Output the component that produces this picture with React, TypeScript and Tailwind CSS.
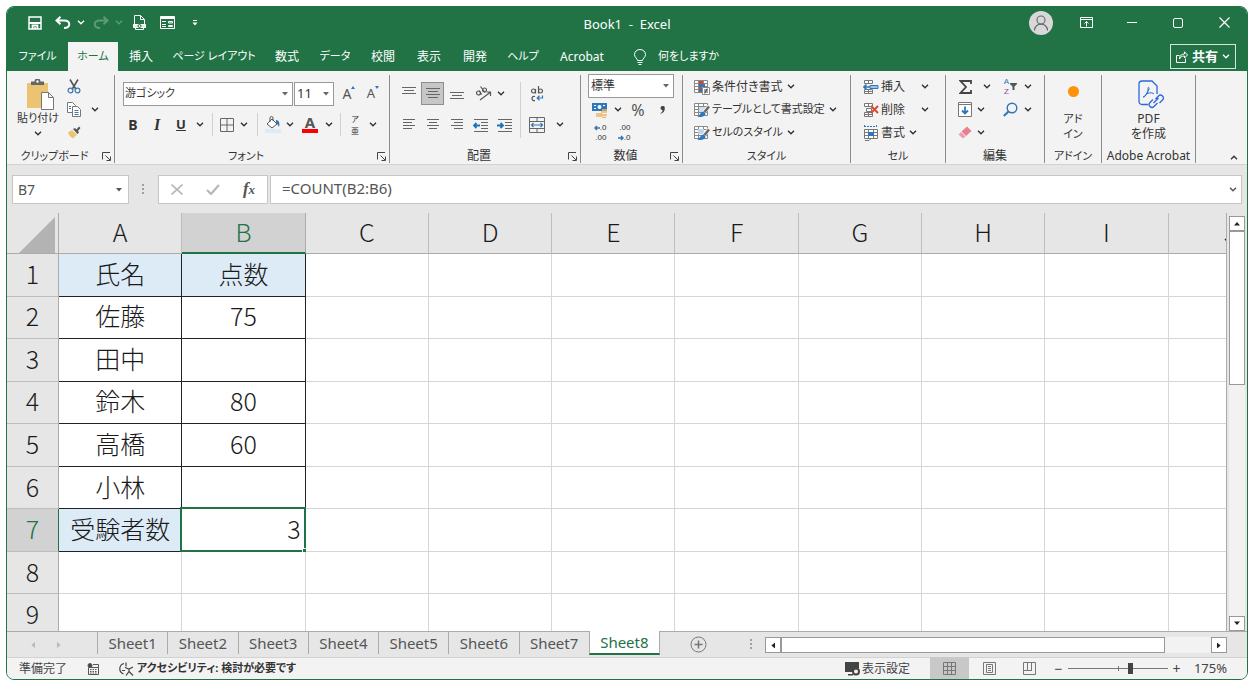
import type { ReactNode } from "react"
import clsx from "clsx"

const menuTabs = [
  { label: "ファイル", width: "w-[61px]", kana: true },
  { label: "ホーム", width: "w-[50px]", kana: true, active: true },
  { label: "挿入", width: "w-[46px]" },
  { label: "ページ レイアウト", width: "w-[100px]", kana: true },
  { label: "数式", width: "w-[46px]" },
  { label: "データ", width: "w-[50px]", kana: true },
  { label: "校閲", width: "w-[46px]" },
  { label: "表示", width: "w-[46px]" },
  { label: "開発", width: "w-[46px]" },
  { label: "ヘルプ", width: "w-[50px]", kana: true },
  { label: "Acrobat", width: "w-[68px]" },
]

const columns = ["A", "B", "C", "D", "E", "F", "G", "H", "I", "J"]

const rows = [
  ["氏名", "点数"],
  ["佐藤", "75"],
  ["田中", ""],
  ["鈴木", "80"],
  ["高橋", "60"],
  ["小林", ""],
  ["受験者数", "3"],
  [],
  [],
]

const sheets = ["Sheet1", "Sheet2", "Sheet3", "Sheet4", "Sheet5", "Sheet6", "Sheet7", "Sheet8"]

function Chevron({ className }: { className?: string }) {
  return (
    <svg viewBox="0 0 8 5" className={clsx("w-2 h-[5px] shrink-0", className)} fill="none" stroke="currentColor" strokeWidth="1.4">
      <path d="M1 .8 4 3.8 7 .8" />
    </svg>
  )
}

function Caret({ className }: { className?: string }) {
  return (
    <svg viewBox="0 0 6 4" className={clsx("w-[6px] h-1 shrink-0 pointer-events-none", className)} fill="currentColor">
      <path d="M0 0h6L3 3.6z" />
    </svg>
  )
}

function Tool({ label, className, children }: { label: string; className?: string; children: ReactNode }) {
  return (
    <button aria-label={label} className={clsx("flex items-center justify-center shrink-0 h-[23px]", className ?? "w-6")}>
      {children}
    </button>
  )
}

function More({ className }: { className?: string }) {
  return (
    <Tool label="その他" className={className ?? "w-[14px]"}>
      <Chevron />
    </Tool>
  )
}

function Launcher() {
  return (
    <button aria-label="詳細設定" className="mr-[3px]">
      <svg viewBox="0 0 9 9" className="w-[9px] h-[9px]" fill="none" stroke="#444" strokeWidth="1">
        <path d="M.5 7.500V.5H8M3.500 3.500 8 8M8.500 4.500v4h-4" />
      </svg>
    </button>
  )
}

function Group({
  title,
  width,
  kana,
  launcher,
  children,
}: {
  title: string
  width: string
  kana?: boolean
  launcher?: boolean
  children: ReactNode
}) {
  return (
    <section className={clsx("flex flex-col shrink-0 border-r border-[#8c8c8c] h-[88px]", width)}>
      <div className="h-[74px]">{children}</div>
      <div className="flex items-center h-[14px] whitespace-nowrap">
        <span className={clsx("flex-1 text-center leading-[14px]", kana && "text-[11px]")}>{title}</span>
        {launcher && <Launcher />}
      </div>
    </section>
  )
}

function Divider({ className }: { className?: string }) {
  return <span className={clsx("w-px bg-[#d0d0d0] shrink-0", className ?? "h-[23px] mx-[5px]")} />
}

function Lines({ rows, className }: { rows: [number, number][]; className?: string }) {
  return (
    <svg viewBox="0 0 16 13" className={clsx("w-4 h-[13px]", className)} stroke="#666" strokeWidth="1">
      {rows.map(([from, to], i) => (
        <path key={i} d={`M${from} ${i * 3 + 1.5}H${to}`} />
      ))}
    </svg>
  )
}

function Indent({ right }: { right?: boolean }) {
  return (
    <svg viewBox="0 0 16 14" className="w-4 h-[14px]" fill="none" stroke="#666">
      <path d="M1 1.500h14M8 4.500h7M8 7.500h7M8 10.500h7M1 13.500h14" />
      <path d={right ? "M0 7.500h5.500M3.500 5l2.500 2.500L3.500 10" : "M7 7.500H1.500M3.500 5 1 7.500 3.500 10"} stroke="#2372b9" strokeWidth="1.8" />
    </svg>
  )
}

function TableIcon({ kind }: { kind: "conditional" | "table" | "cell" }) {
  return (
    <svg viewBox="0 0 16 16" className="w-4 h-4 shrink-0" fill="none" stroke="#888">
      <path d="M.5 1.500h13v12H.5zM.5 4.500h13M.5 7.500h13M.5 10.500h13M4.500 1.500v12M9.500 1.500v12" fill="#fff" />
      {kind === "conditional" && (
        <>
          <path d="M5 2h4v3H5zM5 8h3v2H5z" fill="#d7472f" stroke="none" />
          <path d="M5 5h6v3H5zM5 10h3v3H5z" fill="#2f76bb" stroke="none" />
          <path d="M8.500 8.500h7v7h-7z" fill="#fff" />
          <path d="M10 11h4M10 13h4M13.200 9.500l-2.500 5" stroke="#444" />
        </>
      )}
      {kind !== "conditional" && (
        <>
          {kind === "cell" && <path d="M4 4h6v5H4z" fill="#bcd6ee" stroke="none" />}
          {kind === "table" && <path d="M5 5h8v5H5z" fill="#cfe0f0" stroke="none" />}
          <path d="M15.500 4 10 10" stroke="#f3f3f3" strokeWidth="4" />
          <path d="M15 4.500 10.500 10" stroke="#666" strokeWidth="2.400" />
          <path d="M9.500 9.500c-3 0-3.500 4-6 5 3 1.500 8 0 8-3z" fill="#2f76bb" stroke="none" />
        </>
      )}
    </svg>
  )
}

function CellIcon({ kind }: { kind: "insert" | "delete" | "format" }) {
  return (
    <svg viewBox="0 0 16 16" className="w-4 h-4 shrink-0" fill="none" stroke="#777">
      {kind === "format" ? (
        <>
          <path d="M1 1.500h13M1.500 0v3M13.500 0v3" stroke="#2f76bb" strokeDasharray="2 1" />
          <path d="M1.500 4.500h13v9h-13zM5.500 4.500v9M10.500 4.500v9M1.500 7.500h13M1.500 10.500h13" fill="#fff" />
          <path d="M5 7h6v4H5z" fill="#2f76bb" stroke="none" />
          <path d="M2 15.500h4l2-2" />
        </>
      ) : (
        <>
          <path d="M1.500 1.500h8v3h-8zM5.500 1.500v3M1.500 10.500h8v4h-8zM5.500 10.500v4M1.500 12.500h8" fill="#fff" />
          {kind === "insert" ? (
            <>
              <path d="M7 6.500h8v3H7z" stroke="#2f76bb" fill="#9cc3e6" />
              <path d="M7 8H1M3.500 5.500 1 8l2.500 2.500" stroke="#2f76bb" strokeWidth="1.600" />
            </>
          ) : (
            <>
              <path d="M3.500 6.500h5v3h-5z" fill="#fff" />
              <path d="m8 4 7 7M15 4l-7 7" stroke="#d7472f" strokeWidth="1.800" />
            </>
          )}
        </>
      )}
    </svg>
  )
}

function TitleBar() {
  return (
    <div className="flex items-center h-[35px] text-white">
      <div className="flex items-center flex-1 pb-1">
        <Tool label="上書き保存" className="w-6 ml-4">
          <svg viewBox="0 0 14 14" className="w-[14px] h-[14px]" fill="none" stroke="#fff" strokeWidth="1.500">
            <path d="M1 1h12v12H1z" />
            <path d="M1 7h12M4.500 13V9.500h5V13" strokeWidth="1.800" />
            <path d="M7 11v2" />
          </svg>
        </Tool>
        <Tool label="元に戻す" className="w-[30px]">
          <svg viewBox="0 0 16 13" className="w-4 h-[13px] ml-[2px]" fill="none" stroke="#fff" strokeWidth="2">
            <path d="M5.500.8 1.500 4.500l4 3.800M1.500 4.500H9c7 0 7 7.500 0 7.500" />
          </svg>
        </Tool>
        <More className="w-2" />
        <Tool label="やり直し" className="w-[30px] text-[#5c9a78]">
          <svg viewBox="0 0 16 13" className="w-4 h-[13px] ml-[2px]" fill="none" stroke="currentColor" strokeWidth="2">
            <path d="M10.500.8l4 3.700-4 3.800M14.500 4.500H7c-7 0-7 7.500 0 7.500" />
          </svg>
        </Tool>
        <span className="text-[#5c9a78]">
          <More className="w-2" />
        </span>
        <Tool label="印刷プレビュー" className="w-[30px]">
          <svg viewBox="0 0 13 15" className="w-[13px] h-[15px] ml-[2px]" fill="none" stroke="#fff" strokeWidth="1">
            <path d="M1.500 9V.5h6l4 4V9M7.500.5v4h4M2.500 12v2.500h8V12" />
            <path d="M.5 9.500h12v3H.5z" fill="#e4efe8" />
            <circle cx="6.500" cy="11" r="1.500" stroke="#217346" />
          </svg>
        </Tool>
        <Tool label="フォーム" className="w-7">
          <svg viewBox="0 0 15 13" className="w-[15px] h-[13px]" fill="none" stroke="#fff">
            <path d="M.5.5h14v12H.5zM.5 1.500h14M.5 2.500h14" />
            <path d="M2 5.500h4M2 8.500h4M2 10.500h4M8.500 5.500h4v1.500h-4zM8.500 9.500h4v1h-4z" />
          </svg>
        </Tool>
        <Tool label="クイック アクセス ツール バーのカスタマイズ" className="w-7">
          <svg viewBox="0 0 6 6" className="w-[6px] h-[6px]" fill="#fff">
            <path d="M1 0h4v1H1zM.5 2.500h5L3 5.500z" />
          </svg>
        </Tool>
      </div>
      <h1 className="text-[13px] whitespace-pre">Book1  -  Excel</h1>
      <div className="flex items-center justify-end flex-1 pb-1">
        <button aria-label="アカウント" className="w-6 h-6 rounded-full bg-[#d8d8d8] flex items-center justify-center mr-[10px]">
          <svg viewBox="0 0 16 16" className="w-4 h-4" fill="none" stroke="#666" strokeWidth="1.100">
            <circle cx="8" cy="5" r="4" />
            <path d="M1.500 15.500c0-8.500 13-8.500 13 0" />
          </svg>
        </button>
        <Tool label="リボンの表示オプション" className="w-[46px]">
          <svg viewBox="0 0 13 11" className="w-[13px] h-[11px]" fill="none" stroke="#fff">
            <path d="M.5.5h12v10H.5zM.5 2.500h12M6.500 9.500V4.500M4.500 6.500l2-2 2 2" />
          </svg>
        </Tool>
        <Tool label="最小化" className="w-[46px]">
          <span className="w-[10px] h-px bg-white" />
        </Tool>
        <Tool label="最大化" className="w-[46px]">
          <span className="w-[10px] h-[10px] border border-white rounded-[2px]" />
        </Tool>
        <Tool label="閉じる" className="w-[46px]">
          <svg viewBox="0 0 11 11" className="w-[11px] h-[11px]" stroke="#fff" strokeWidth="1.200">
            <path d="m.5.5 10 10M10.500.5l-10 10" />
          </svg>
        </Tool>
      </div>
    </div>
  )
}

function MenuBar() {
  return (
    <nav className="flex h-[29px] text-white text-xs whitespace-nowrap">
      {menuTabs.map((t) => (
        <button
          key={t.label}
          className={clsx("shrink-0 h-full", t.width, t.kana && "text-[11px]", t.active && "bg-[#f3f3f3] text-[#217346]")}
        >
          {t.label}
        </button>
      ))}
      <button className="flex items-center gap-3 ml-[18px] text-[11px]">
        <svg viewBox="0 0 12 16" className="w-3 h-4" fill="none" stroke="#fff">
          <path d="M3.500 11.500c0-2-3-3-3-6a5.500 5 0 0 1 11 0c0 3-3 4-3 6zM3.500 13.500h5M4.500 15.500h3" />
        </svg>
        何をしますか
      </button>
      <button className="flex items-center justify-center gap-1 ml-auto mr-[11px] mt-[2px] w-[66px] h-[25px] border border-[#d5e5db] font-bold text-[13px]">
        <svg viewBox="0 0 12 12" className="w-3 h-3" fill="none" stroke="#fff">
          <path d="M3.500 4.500h-3v7h9V7.500M3.500 8c0-3 1.500-5 5-5V.8l3 3.200-3 3V5c-3 0-4 1-5 3z" />
        </svg>
        共有
        <Chevron />
      </button>
    </nav>
  )
}

function Ribbon() {
  return (
    <div className="flex h-[94px] shrink-0 pt-1 bg-[#f3f3f3] text-[#333] text-xs border-b border-[#d2d2d2] overflow-hidden">
      <Group title="クリップボード" width="w-[108px]" kana launcher>
        <div className="flex">
          <button className="flex flex-col items-center w-[48px] ml-[7px] pt-1 leading-4 whitespace-nowrap text-[11px]">
            <svg viewBox="0 0 28 31" className="w-7 h-[31px] ml-1">
              <path d="M1 4h21v25H1z" fill="#ecc373" />
              <path d="M5 6V2.500h3.500a3 3 0 0 1 6 0H18V6z" fill="#666" />
              <circle cx="11.500" cy="2.500" r="1.200" fill="#fff" />
              <path d="M15.500 13.500h7l5 5v12h-12zM22.500 13.500v5h5" fill="#fff" stroke="#777" />
            </svg>
            貼り付け
            <Chevron className="mt-[5px]" />
          </button>
          <div className="w-6">
            <Tool label="切り取り">
              <svg viewBox="0 0 14 15" className="w-[14px] h-[15px]" fill="none">
                <path d="m3 .5 6 10M11 .5l-6 10" stroke="#555" strokeWidth="1.600" />
                <circle cx="3.500" cy="11.500" r="2.400" stroke="#3d7ab8" strokeWidth="1.200" />
                <circle cx="10.500" cy="11.500" r="2.400" stroke="#3d7ab8" strokeWidth="1.200" />
              </svg>
            </Tool>
            <Tool label="コピー">
              <svg viewBox="0 0 15 15" className="w-[15px] h-[15px]" fill="#fff" stroke="#777">
                <path d="M.5.5h5l3 3v7h-8z" />
                <path d="M5.500 4.500h5l3 3v7h-8z" />
                <path d="M2 4.500h2M2 6.500h2M7.500 8.500h4M7.500 10.500h4M7.500 12.500h4" stroke="#3d7ab8" />
              </svg>
            </Tool>
            <Tool label="書式のコピー">
              <svg viewBox="0 0 14 13" className="w-[14px] h-[13px]">
                <path d="M1 6.500 5 4l5 4.500L6 12.500C4 11 2 10 1 6.500z" fill="#ecc373" />
                <path d="m6 3 2-1 1.500 1.500L12 .5 13.500 2l-2.500 3 1 1.500-1.500 1.500z" fill="#555" />
              </svg>
            </Tool>
          </div>
          <div className="pt-[23px] pl-[2px]">
            <More />
          </div>
        </div>
      </Group>

      <Group title="フォント" width="w-[275px]" kana launcher>
        <div className="flex items-center h-[31px] mt-[3px] pl-2">
          <div className="flex items-center w-[170px] h-6 border border-[#999] bg-white mr-px">
            <select aria-label="フォント名" className="appearance-none flex-1 min-w-0 bg-transparent pl-[1px] text-[11px] outline-none">
              <option>游ゴシック</option>
            </select>
            <Caret className="mr-1 text-[#666]" />
          </div>
          <div className="flex items-center w-10 h-6 border border-[#999] bg-white">
            <select aria-label="フォント サイズ" className="appearance-none flex-1 min-w-0 bg-transparent pl-[2px] text-[13px] outline-none">
              <option>11</option>
            </select>
            <Caret className="mr-1 text-[#666]" />
          </div>
          <Tool label="フォント サイズの拡大" className="w-6 ml-[3px] text-[#555]">
            <span className="text-sm">A</span>
            <svg viewBox="0 0 4 3" className="w-1 h-[3px] mb-3" fill="#2f76bb"><path d="M0 3 2 0l2 3z" /></svg>
          </Tool>
          <Tool label="フォント サイズの縮小" className="w-6 text-[#555]">
            <span className="text-[13px]">A</span>
            <svg viewBox="0 0 4 3" className="w-1 h-[3px] mb-3" fill="#2f76bb"><path d="M0 0h4L2 3z" /></svg>
          </Tool>
        </div>
        <div className="flex items-center h-[31px] pl-[6px] text-sm">
          <Tool label="太字"><b>B</b></Tool>
          <Tool label="斜体"><i className="font-['Liberation_Serif',serif] font-bold text-base">I</i></Tool>
          <Tool label="下線"><b className="underline text-[13px]">U</b></Tool>
          <More />
          <Divider />
          <Tool label="罫線" className="w-[18px]">
            <svg viewBox="0 0 14 14" className="w-[14px] h-[14px]" fill="none" stroke="#666">
              <path d="M.5.5h13v13H.5zM7 .5v13M.5 7h13" />
            </svg>
          </Tool>
          <More className="w-4" />
          <Divider />
          <Tool label="塗りつぶしの色" className="w-5">
            <svg viewBox="0 0 16 17" className="w-4 h-[17px]" fill="none">
              <path d="M0 13h16v4H0z" fill="#ddebf7" />
              <path d="m7 3 5 5-5 4-5-4z" fill="#fff" stroke="#555" />
              <path d="M5 6V2a1.500 1.500 0 0 1 3 0v3" stroke="#555" />
              <path d="M11 4c3 0 4 3 3 7-1-1-1-3-3-4z" fill="#2f76bb" />
            </svg>
          </Tool>
          <More />
          <Tool label="フォントの色" className="w-[26px]">
            <span className="flex flex-col items-center">
              <b className="leading-[13px] text-[15px] text-[#555]">A</b>
              <span className="w-4 h-1 bg-[#fe0000]" />
            </span>
          </Tool>
          <More className="w-3" />
          <Divider />
          <Tool label="ふりがなの表示" className="w-[18px]">
            <span className="flex flex-col text-[8px] leading-[12px]">
              <span>ア</span>
              <span>亜</span>
            </span>
          </Tool>
          <More className="w-[18px]" />
        </div>
      </Group>

      <Group title="配置" width="w-[191px]" launcher>
        <div className="flex">
          <div className="pt-[3px] pl-[7px]">
            <div className="flex items-center h-[31px]">
              <Tool label="上揃え"><Lines rows={[[1, 15], [3, 13], [1, 15]]} className="mb-[3px]" /></Tool>
              <Tool label="上下中央揃え" className="w-[23px] bg-[#c6c6c6] border border-[#8e8e8e]">
                <Lines rows={[[1, 15], [3, 13], [1, 15], [3, 13]]} />
              </Tool>
              <Tool label="下揃え" className="w-[25px]"><Lines rows={[[1, 15], [3, 13], [1, 15]]} className="mt-2" /></Tool>
              <Tool label="方向" className="w-7">
                <svg viewBox="0 0 17 15" className="w-[17px] h-[15px]" fill="none" stroke="#555" strokeWidth="1.200">
                  <circle cx="3.500" cy="7" r="2" />
                  <path d="m4 4.500 2.800 4M5.500.5l4.500 6" />
                  <circle cx="9.500" cy="4" r="2" />
                  <path d="M5 14 15 6.500M11.500 6H15.500v4" />
                </svg>
              </Tool>
              <More className="w-2" />
            </div>
            <div className="flex items-center h-[31px]">
              <Tool label="左揃え"><Lines rows={[[2, 14], [2, 11], [2, 14], [2, 11]]} /></Tool>
              <Tool label="中央揃え"><Lines rows={[[2, 14], [4, 12], [2, 14], [4, 12]]} /></Tool>
              <Tool label="右揃え"><Lines rows={[[2, 14], [5, 14], [2, 14], [5, 14]]} /></Tool>
              <Tool label="インデントを減らす"><Indent /></Tool>
              <Tool label="インデントを増やす"><Indent right /></Tool>
            </div>
          </div>
          <Divider className="h-14 ml-[3px] mt-[7px]" />
          <div className="pt-[3px] pl-1">
            <div className="flex items-center h-[31px]">
              <Tool label="折り返して全体を表示する">
                <svg viewBox="0 0 14 16" className="w-[14px] h-4" fill="none" stroke="#555" strokeWidth="1.200">
                  <circle cx="3.500" cy="5" r="2" />
                  <path d="M5.500 3v4.500M8.500 0v7.500" />
                  <circle cx="10.500" cy="5" r="2" />
                  <path d="M5 10.500c-4-1.500-4 5.500 0 4" />
                  <path d="M12.500 9.500V12H7.500M9.500 9.800 7.200 12l2.300 2.200" stroke="#2f76bb" />
                </svg>
              </Tool>
            </div>
            <div className="flex items-center h-[31px]">
              <Tool label="セルを結合して中央揃え">
                <svg viewBox="0 0 16 16" className="w-4 h-4" fill="none" stroke="#666">
                  <path d="M.5.500h15v15H.5zM.5 4.500h15M.5 11.500h15M8 .5v4M8 11.500v4" />
                  <path d="M2.500 8h11M4.500 6l-2 2 2 2M11.500 6l2 2-2 2" stroke="#2f76bb" strokeWidth="1.200" />
                </svg>
              </Tool>
              <More className="w-[22px]" />
            </div>
          </div>
        </div>
      </Group>

      <Group title="数値" width="w-[102px]" launcher>
        <div className="pl-[7px] -mt-px">
          <div className="flex items-center w-[86px] h-6 border border-[#999] bg-white">
            <select aria-label="表示形式" className="appearance-none flex-1 min-w-0 bg-transparent pl-[2px] outline-none">
              <option>標準</option>
            </select>
            <Caret className="mr-1 text-[#666]" />
          </div>
          <div className="flex items-center">
            <Tool label="通貨表示形式">
              <svg viewBox="0 0 16 16" className="w-4 h-4" fill="none">
                <path d="M0 1h15v8H0z" fill="#2f76bb" />
                <path d="M2 3h2v1H2zM11 3h2v1h-2zM2 6h2v1H2z" fill="#fff" />
                <circle cx="7.500" cy="5" r="2" fill="#fff" />
                <path d="M10 8h5M9 10h6M4 12h6M9 13h6M4 14h6M10 15.500h4" stroke="#ecb764" strokeWidth="1.500" />
              </svg>
            </Tool>
            <More className="w-[11px]" />
            <Tool label="パーセント スタイル" className="w-[30px]"><span className="text-base text-[#555]">%</span></Tool>
            <Tool label="桁区切りスタイル" className="w-[18px]">
              <svg viewBox="0 0 5 8" className="w-[5px] h-2" fill="#444"><path d="M2.500 0a2 2 0 0 1 2.300 2C5 5 3 7 .8 7.800L.5 7C2 6.500 2.500 5.500 2.500 4a2 2 0 0 1 0-4z" /></svg>
            </Tool>
          </div>
          <div className="flex items-center font-['Liberation_Sans',sans-serif] text-[8px] leading-[10px]">
            <Tool label="小数点以下の表示桁数を増やす">
              <span className="flex flex-col items-end">
                <span className="flex items-center">
                  <svg viewBox="0 0 6 6" className="w-[6px] h-[6px]" fill="none" stroke="#2f76bb" strokeWidth="1.500"><path d="M6 3H1M3 1 1 3l2 2" /></svg>
                  .0
                </span>
                <span>.00</span>
              </span>
            </Tool>
            <Tool label="小数点以下の表示桁数を減らす">
              <span className="flex flex-col items-end">
                <span>.00</span>
                <span className="flex items-center">
                  <svg viewBox="0 0 6 6" className="w-[6px] h-[6px]" fill="none" stroke="#2f76bb" strokeWidth="1.500"><path d="M0 3h5M3 1l2 2-2 2" /></svg>
                  .0
                </span>
              </span>
            </Tool>
          </div>
        </div>
      </Group>

      <Group title="スタイル" width="w-[168px]" kana>
        <div className="pl-[11px] whitespace-nowrap">
          <button className="flex items-center h-[23px] gap-[2px]"><TableIcon kind="conditional" />条件付き書式<Chevron className="ml-[2px]" /></button>
          <button className="flex items-center h-[23px] gap-[2px] text-[11px]"><TableIcon kind="table" />テーブルとして書式設定<Chevron className="ml-[2px]" /></button>
          <button className="flex items-center h-[23px] gap-[2px] text-[11px]"><TableIcon kind="cell" />セルのスタイル<Chevron className="ml-[2px]" /></button>
        </div>
      </Group>

      <Group title="セル" width="w-[95px]" kana>
        <div className="pl-3 whitespace-nowrap">
          <button className="flex items-center h-[23px] gap-[2px]"><CellIcon kind="insert" />挿入<Chevron className="ml-[14px]" /></button>
          <button className="flex items-center h-[23px] gap-[2px]"><CellIcon kind="delete" />削除<Chevron className="ml-[14px]" /></button>
          <button className="flex items-center h-[23px] gap-[2px]"><CellIcon kind="format" />書式<Chevron className="ml-[2px]" /></button>
        </div>
      </Group>

      <Group title="編集" width="w-[99px]">
        <div className="pl-[7px]">
          <div className="flex">
            <Tool label="オート SUM">
              <svg viewBox="0 0 13 14" className="w-[13px] h-[14px]" fill="none" stroke="#444" strokeWidth="1.800">
                <path d="M12 4V1H1.500L7 7 1.500 13H12v-3" />
              </svg>
            </Tool>
            <More className="w-5" />
            <Tool label="並べ替えとフィルター" className="w-[27px]">
              <span className="flex flex-col font-['Liberation_Sans',sans-serif] text-[8px] leading-[10px]">
                <span className="text-[#2f76bb]">A</span>
                <span className="text-[#8a4ba8]">Z</span>
              </span>
              <svg viewBox="0 0 7 7" className="w-[7px] h-[7px] ml-px" fill="#555"><path d="M0 0h7v1L4.500 3.500V7h-2V3.500L0 1z" /></svg>
            </Tool>
            <More className="w-2" />
          </div>
          <div className="flex">
            <Tool label="フィル">
              <svg viewBox="0 0 14 15" className="w-[14px] h-[15px]" fill="#fff" stroke="#777">
                <path d="M.5.5h13v14H.5zM.5 2.500h13" />
                <path d="M7 4.500v7M4 8.500l3 3 3-3" fill="none" stroke="#2f76bb" strokeWidth="1.800" />
              </svg>
            </Tool>
            <More className="w-2" />
            <Tool label="検索と選択" className="w-[27px] ml-3">
              <svg viewBox="0 0 15 15" className="w-[15px] h-[15px]" fill="none" stroke="#2f76bb">
                <circle cx="9" cy="6" r="4.800" strokeWidth="1.400" />
                <path d="M6 9 .8 14" strokeWidth="2" />
              </svg>
            </Tool>
            <More className="w-2" />
          </div>
          <div className="flex">
            <Tool label="クリア">
              <svg viewBox="0 0 14 13" className="w-[14px] h-[13px]">
                <path d="M9 .5 13.500 5 8 10 3.500 5.500z" fill="#ea7f92" />
                <path d="M3 6 7.500 10.500 5 12.500.5 8.500z" fill="#ef9dab" />
              </svg>
            </Tool>
            <More className="w-2" />
          </div>
        </div>
      </Group>

      <Group title="アドイン" width="w-[57px]" kana>
        <button className="flex flex-col items-center w-full leading-[15px] pt-[11px] text-[11px]">
          <span className="w-[11px] h-[11px] rounded-full bg-[#ff9208] mb-[14px]" />
          アド
          <br />
          イン
        </button>
      </Group>

      <Group title="Adobe Acrobat" width="w-[94px]">
        <button className="flex flex-col items-center w-full leading-[15px] pt-[5px]">
          <svg viewBox="0 0 26 29" className="w-[26px] h-[29px] mb-[2px] ml-1" fill="none" stroke="#2b67e0" strokeWidth="1.300">
            <path d="M10 24.500H4a3 3 0 0 1-3-3V4a3 3 0 0 1 3-3h10l5 5v8" />
            <path d="M5 17c4-2 5-6 5-8.500 0-2 1.500-1 1 .5-1 3-3.500 7.500-5.500 8.500M9 13.500c3-1 6-1 7 .5" strokeWidth="1" />
            <path d="m17.500 19 3-3a2.800 2.800 0 0 1 4 4l-3 3M19.500 23l-3.500 3.500a2.800 2.800 0 0 1-4-4l3-3M15.500 23l5-5" />
          </svg>
          PDF
          <br />
          を作成
        </button>
      </Group>
      <button aria-label="リボンを折りたたむ" className="ml-auto mr-2 mt-auto mb-1">
        <Chevron className="rotate-180 w-[10px]" />
      </button>
    </div>
  )
}

function Dots() {
  return (
    <svg viewBox="0 0 3 11" className="w-[3px] h-[11px]" fill="#a0a0a0">
      <path d="M0 0h2v2H0zM0 4h2v2H0zM0 8h2v2H0z" />
    </svg>
  )
}

function FormulaBar() {
  return (
    <div className="flex h-12 shrink-0 pt-[10px] pl-[5px] pr-[5px] text-[#555] text-sm">
      <div className="flex items-center w-[117px] h-[29px] border border-[#c6c6c6] bg-white">
        <input aria-label="名前ボックス" defaultValue="B7" className="flex-1 min-w-0 pl-[5px] outline-none" />
        <Caret className="mr-[6px]" />
      </div>
      <div className="flex items-center justify-center w-[29px] h-[29px]">
        <Dots />
      </div>
      <div className="flex items-center w-[110px] h-[29px] border border-[#c6c6c6] bg-white">
        <Tool label="キャンセル" className="w-9">
          <svg viewBox="0 0 12 11" className="w-3 h-[11px]" stroke="#b8b8b8" strokeWidth="1.600"><path d="m.5.5 11 10M11.500.5l-11 10" /></svg>
        </Tool>
        <Tool label="入力" className="w-9">
          <svg viewBox="0 0 14 11" className="w-[14px] h-[11px]" fill="none" stroke="#b8b8b8" strokeWidth="2.200"><path d="m1 6 4 4 8-9" /></svg>
        </Tool>
        <Tool label="関数の挿入" className="w-9">
          <i className="font-['Liberation_Serif',serif] font-bold text-[17px]">f<span className="text-[13px]">x</span></i>
        </Tool>
      </div>
      <div className="flex items-center flex-1 h-[29px] ml-[2px] border border-[#c6c6c6] bg-white">
        <input aria-label="数式バー" defaultValue="=COUNT(B2:B6)" className="flex-1 min-w-0 pl-[11px] pb-1 text-[15px] leading-6 outline-none" />
        <Tool label="数式バーの展開" className="w-4"><Chevron /></Tool>
      </div>
    </div>
  )
}

function Grid() {
  return (
    <div className="flex flex-1 min-h-0 overflow-hidden">
      <div className="flex-1 min-w-0 overflow-hidden border-r border-[#ababab] mr-[2px]">
        <table className="table-fixed border-separate border-spacing-0 w-[1285px] h-[424px] text-[25px] leading-8 text-[#1a1a1a] font-light font-['Noto_Sans_CJK_JP',sans-serif]">
          <thead>
            <tr>
              <th className="w-[52px] p-0 bg-[#e6e6e6] border-r border-b border-[#ababab]">
                <svg viewBox="0 0 36 36" className="w-9 h-9 ml-3 mt-1" fill="#b3b3b3"><path d="M36 0v36H0z" /></svg>
              </th>
              {columns.map((c) => (
                <th
                  key={c}
                  scope="col"
                  className={clsx(
                    "p-0 pb-1 font-light border-r",
                    c === "B"
                      ? "bg-[#d2d2d2] text-[#217346] border-r-[#ababab] border-b-2 border-b-[#217346]"
                      : "bg-[#e6e6e6] border-b border-r-[#bdbdbd] border-b-[#ababab]"
                  )}
                >
                  {c}
                </th>
              ))}
            </tr>
          </thead>
          <tbody>
            {rows.map((row, r) => (
              <tr key={r}>
                <th
                  scope="row"
                  className={clsx(
                    "p-0 pb-1 font-light border-r border-b border-b-[#bdbdbd]",
                    r === 6 ? "bg-[#d2d2d2] text-[#217346] border-r-[#217346]" : "bg-[#e6e6e6] border-r-[#ababab]"
                  )}
                >
                  {r + 1}
                </th>
                {columns.map((c, i) => (
                  <td
                    key={c}
                    className={clsx(
                      "relative p-0 pb-1 border-r border-b",
                      i < 2 && r < 7 ? "border-[#222]" : "border-[#d6d6d6]",
                      (i < 2 && r === 0) || (i === 0 && r === 6) ? "bg-[#ddebf7]" : "bg-white",
                      i === 1 && r === 6 ? "text-right pr-1" : "text-center"
                    )}
                  >
                    {row[i]}
                    {i === 1 && r === 6 && (
                      <>
                        <span className="absolute -inset-px border-2 border-[#217346] -top-[2px] -left-[2px]" />
                        <span className="absolute -right-[3px] -bottom-[3px] w-[5px] h-[5px] bg-[#217346] outline outline-white" />
                      </>
                    )}
                  </td>
                ))}
              </tr>
            ))}
          </tbody>
        </table>
      </div>
      <div className="flex flex-col w-4 mr-[2px] mt-[3px] bg-[#f2f2f2]">
        <button aria-label="上へスクロール" className="flex items-center justify-center h-[15px] border border-[#999] bg-white">
          <Caret className="rotate-180 w-2 h-[5px] text-[#222]" />
        </button>
        <div className="h-[154px] border border-[#999] bg-white" />
        <button aria-label="下へスクロール" className="flex items-center justify-center h-[15px] mt-auto border border-[#999] bg-white">
          <Caret className="w-2 h-[5px] text-[#222]" />
        </button>
      </div>
    </div>
  )
}

function SheetBar() {
  return (
    <div className="flex h-[26px] shrink-0 border-t border-[#ababab] text-[15px] text-[#555]">
      <div className="flex items-center justify-center gap-5 w-[90px] pr-3 text-[#b8b8b8]">
        <button aria-label="前のシート"><Caret className="rotate-90" /></button>
        <button aria-label="次のシート"><Caret className="-rotate-90" /></button>
      </div>
      <div className="flex w-[563px] shrink-0">
        {sheets.map((s) => (
          <button
            key={s}
            className={clsx(
              "flex-1 leading-[22px]",
              s === "Sheet8"
                ? "h-6 -mt-px bg-white text-[#217346] border-x border-[#ababab] border-b-2 border-b-[#217346]"
                : "h-[22px] border-l border-[#ababab]"
            )}
          >
            {s}
          </button>
        ))}
      </div>
      <button aria-label="新しいシート" className="ml-[30px]">
        <svg viewBox="0 0 17 17" className="w-[17px] h-[17px]" fill="none" stroke="#777">
          <circle cx="8.500" cy="8.500" r="7.500" />
          <path d="M8.500 4.500v8M4.500 8.500h8" strokeWidth="1.500" />
        </svg>
      </button>
      <div className="flex items-center ml-auto pr-3">
        <Dots />
      </div>
      <div className="flex w-[462px] h-4 mt-[5px] mr-5 bg-[#f2f2f2]">
        <button aria-label="左へスクロール" className="flex items-center justify-center w-4 border border-[#999] bg-white">
          <Caret className="rotate-90 w-2 h-[5px] text-[#222]" />
        </button>
        <div className="w-[384px] border border-[#999] bg-white" />
        <button aria-label="右へスクロール" className="flex items-center justify-center w-4 ml-auto border border-[#999] bg-white">
          <Caret className="-rotate-90 w-2 h-[5px] text-[#222]" />
        </button>
      </div>
    </div>
  )
}

function StatusBar() {
  return (
    <div className="flex items-center h-[22px] shrink-0 pl-3 pr-5 bg-[#f3f3f3] text-xs text-[#444] border-t border-[#d2d2d2] whitespace-nowrap">
      <span className="w-[68px]">準備完了</span>
      <button aria-label="マクロの記録" className="w-8">
        <svg viewBox="0 0 12 12" className="w-3 h-3" fill="none" stroke="#555">
          <path d="M1.500 4.500h10v7h-10zM6 1.500h5.500v3" />
          <circle cx="3" cy="2.500" r="2" fill="#444" />
          <path d="M3 6.500h7M3 8.500h7M3 10h7" strokeDasharray="1.500 1" />
        </svg>
      </button>
      <button className="flex items-center gap-[2px] font-bold text-[11px] text-[#333]">
        <svg viewBox="0 0 16 14" className="w-4 h-[14px]" fill="none" stroke="#444" strokeWidth="1.200">
          <path d="M5 1.500C-.5 3-.5 10 4.500 12M7 .5v4M6 5.500l4 1.500 4-2M10 7v2.500l-3 4M10 9.500l4 4" />
          <path d="M3 8.500h3" />
        </svg>
        アクセシビリティ: 検討が必要です
      </button>
      <button className="flex items-center gap-px ml-auto mr-5">
        <svg viewBox="0 0 16 15" className="w-4 h-[15px]">
          <path d="M0 1h14v6l-6 4H0zM3 13h5v1.500H3z" fill="#444" />
          <circle cx="11" cy="10.500" r="3" fill="#f3f3f3" stroke="#444" strokeWidth="2" />
        </svg>
        表示設定
      </button>
      <Tool label="標準" className="w-[39px] bg-[#c8c8c8]">
        <svg viewBox="0 0 13 13" className="w-[13px] h-[13px]" fill="none" stroke="#777"><path d="M.5.5h12v12H.5zM4.500.5v12M8.500.5v12M.5 4.500h12M.5 8.500h12" /></svg>
      </Tool>
      <Tool label="ページ レイアウト" className="w-10">
        <svg viewBox="0 0 13 13" className="w-[13px] h-[13px]" fill="none" stroke="#777"><path d="M.5.5h12v12H.5zM3.500 2.500h6v8h-6zM5 4.500h3M5 6.500h3M5 8.500h3" /></svg>
      </Tool>
      <Tool label="改ページ プレビュー" className="w-10">
        <svg viewBox="0 0 13 13" className="w-[13px] h-[13px]" fill="none" stroke="#777"><path d="M.5.5h12v12H.5zM4.500.5v8M8.500.5v8M0 8.500h9" /></svg>
      </Tool>
      <button aria-label="縮小" className="w-[19px] text-sm">−</button>
      <span className="relative flex items-center">
        <input
          type="range"
          aria-label="ズーム"
          min={0}
          max={100}
          defaultValue={63}
          className="appearance-none w-[100px] h-px bg-[#777] [&::-webkit-slider-thumb]:appearance-none [&::-webkit-slider-thumb]:w-[5px] [&::-webkit-slider-thumb]:h-[11px] [&::-webkit-slider-thumb]:bg-[#444]"
        />
        <span className="absolute left-1/2 w-px h-[5px] bg-[#777]" />
      </span>
      <button aria-label="拡大" className="w-[17px] text-sm">+</button>
      <span className="w-[42px] text-right text-[13px]">175%</span>
    </div>
  )
}

export default function App() {
  return (
    <div className="h-screen bg-white pt-[6px] pl-[6px] pr-[7px] pb-[7px] font-['Noto_Sans','Noto_Sans_CJK_JP',sans-serif] [font-feature-settings:'palt']">
      <main className="flex flex-col h-full bg-[#e6e6e6] border border-[#217346] rounded-lg overflow-hidden">
        <header className="bg-[#217346] shrink-0">
          <TitleBar />
          <MenuBar />
        </header>
        <Ribbon />
        <FormulaBar />
        <Grid />
        <SheetBar />
        <StatusBar />
      </main>
    </div>
  )
}
